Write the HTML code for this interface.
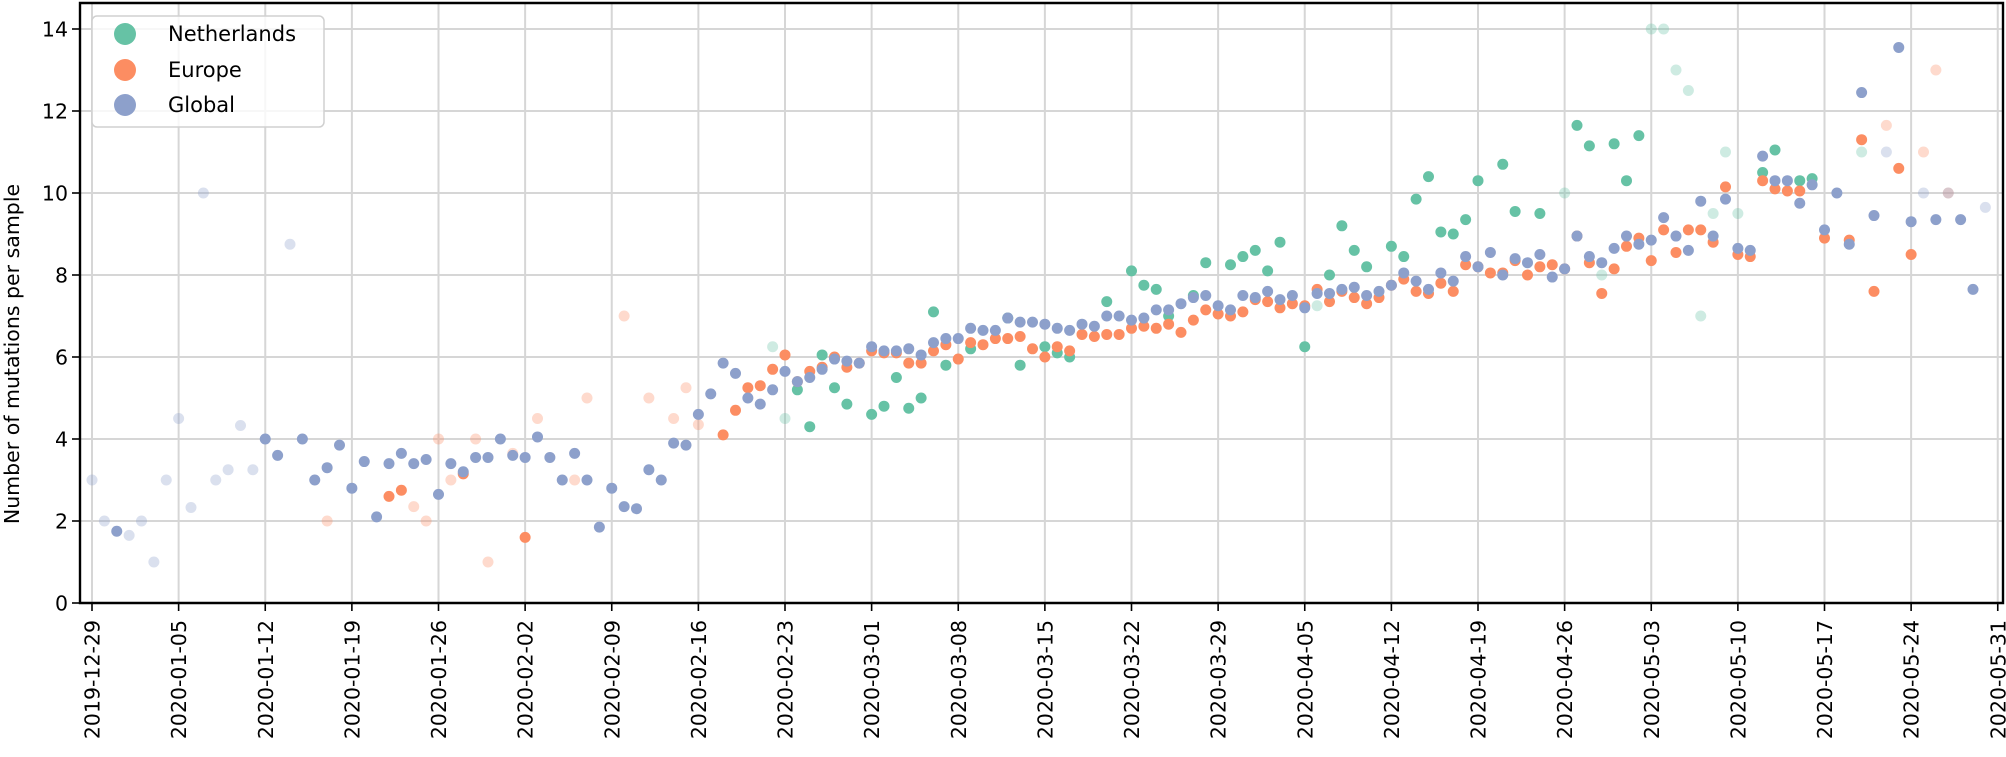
<!DOCTYPE html>
<html><head><meta charset="utf-8"><style>
html,body{margin:0;padding:0;background:#fff;}
svg{display:block;font-family:"DejaVu Sans","Liberation Sans",sans-serif;}
</style></head><body>
<svg id="s" width="2006" height="757" viewBox="0 0 2006 757" xmlns="http://www.w3.org/2000/svg">
<g id="grid"></g>
<g id="pts"></g>
<g id="axes"></g>
<g id="legend">
<rect x="92" y="16" width="232" height="111" rx="5" fill="#fff" fill-opacity="0.8" stroke="#d0d0d0" stroke-width="1.5"/>
<circle cx="125" cy="34" r="11" fill="#66c2a5"/>
<circle cx="125" cy="70" r="11" fill="#fc8d62"/>
<circle cx="125" cy="105" r="11" fill="#8da0cb"/>
<text x="168" y="41" font-size="21">Netherlands</text>
<text x="168" y="77" font-size="21">Europe</text>
<text x="168" y="112" font-size="21">Global</text>
</g>
</svg>
<script>
var NS="http://www.w3.org/2000/svg";
var X0=92,DX=12.375,Y0=603,DY=41.0;
function px(d){return X0+DX*d;}
function py(v){return Y0-DY*v;}
function el(p,t,a,txt){var e=document.createElementNS(NS,t);for(var k in a)e.setAttribute(k,a[k]);if(txt!==undefined)e.textContent=txt;p.appendChild(e);return e;}
var grid=document.getElementById('grid'),axes=document.getElementById('axes'),pts=document.getElementById('pts');
for(var v=0;v<=14;v+=2){el(grid,'line',{x1:80,x2:2003,y1:py(v),y2:py(v),stroke:'#d6d6d6','stroke-width':2});}
var labels=["2019-12-29","2020-01-05","2020-01-12","2020-01-19","2020-01-26","2020-02-02","2020-02-09","2020-02-16","2020-02-23","2020-03-01","2020-03-08","2020-03-15","2020-03-22","2020-03-29","2020-04-05","2020-04-12","2020-04-19","2020-04-26","2020-05-03","2020-05-10","2020-05-17","2020-05-24","2020-05-31"];
for(var k=0;k<labels.length;k++){var x=px(7*k);
 el(grid,'line',{x1:x,x2:x,y1:3,y2:603,stroke:'#d6d6d6','stroke-width':2});
 el(axes,'line',{x1:x,x2:x,y1:603,y2:611,stroke:'#000','stroke-width':1.6});
 el(axes,'text',{x:0,y:0,'font-size':20.5,'text-anchor':'end',transform:'translate('+(x+7.5)+',620) rotate(-90)'},labels[k]);
}
for(var v=0;v<=14;v+=2){el(axes,'line',{x1:72,x2:80,y1:py(v),y2:py(v),stroke:'#000','stroke-width':1.6});
 el(axes,'text',{x:68,y:py(v)+7.5,'font-size':20.5,'text-anchor':'end'},String(v));}
el(axes,'text',{x:0,y:0,'font-size':20.5,'text-anchor':'middle',transform:'translate(19,354) rotate(-90)'},'Number of mutations per sample');
el(axes,'path',{d:'M80,603 L80,3 L2003,3 L2003,603 Z',fill:'none',stroke:'#000','stroke-width':2.4});
function day(xd){return Math.round((xd-72)/9.675);}
var NL=[[604,6.25,1],[614,4.5,1],[624,5.2],[633,4.3],[643,6.05],[653,5.25],[662,4.85],[681,4.6],[691,4.8],[701,5.5],[710,4.75],[720,5.0],[730,7.1],[739,5.8],[759,6.2],[788,6.95],[797,5.8],[817,6.25],[826,6.1],[836,6.0],[865,7.35],[884,8.1],[894,7.75],[904,7.65],[913,7.0],[933,7.5],[942,8.3],[962,8.25],[971,8.45],[981,8.6],[991,8.1],[1000,8.8],[1020,6.25],[1029,7.25,1],[1039,8.0],[1049,9.2],[1058,8.6],[1068,8.2],[1087,8.7],[1097,8.45],[1107,9.85],[1116,10.4],[1126,9.05],[1136,9.0],[1145,9.35],[1155,10.3],[1175,10.7],[1184,9.55],[1204,9.5],[1223,10.0,1],[1233,11.65],[1242,11.15],[1252,8.0,1],[1262,11.2],[1271,10.3],[1281,11.4],[1291,14.0,1],[1301,14.0,1],[1310,13.0,1],[1320,12.5,1],[1330,7.0,1],[1339,9.5,1],[1349,11.0,1],[1359,9.5,1],[1378,10.5],[1388,11.05],[1407,10.3],[1417,10.35],[1455,11.0,1]];
var EU=[[256,2.0,1],[304,2.6],[314,2.75],[323,2.35,1],[333,2.0,1],[342,4.0,1],[352,3.0,1],[362,3.15],[372,4.0,1],[381,1.0,1],[401,3.65,1],[410,1.6],[420,4.5,1],[449,3.0,1],[459,5.0,1],[488,7.0,1],[507,5.0,1],[527,4.5,1],[536,5.25,1],[546,4.35,1],[566,4.1],[575,4.7],[585,5.25],[595,5.3],[604,5.7],[614,6.05],[624,5.4],[633,5.65],[643,5.75],[653,6.0],[662,5.75],[672,5.85],[681,6.15],[691,6.1],[701,6.1],[710,5.85],[720,5.85],[730,6.15],[739,6.3],[749,5.95],[759,6.35],[768,6.3],[778,6.45],[788,6.45],[797,6.5],[807,6.2],[817,6.0],[826,6.25],[836,6.15],[846,6.55],[855,6.5],[865,6.55],[875,6.55],[884,6.7],[894,6.75],[904,6.7],[913,6.8],[923,6.6],[933,6.9],[942,7.15],[952,7.05],[962,7.0],[971,7.1],[981,7.4],[991,7.35],[1000,7.2],[1010,7.3],[1020,7.25],[1029,7.65],[1039,7.35],[1049,7.6],[1058,7.45],[1068,7.3],[1078,7.45],[1087,7.75],[1097,7.9],[1107,7.6],[1116,7.55],[1126,7.8],[1136,7.6],[1145,8.25],[1155,8.2],[1165,8.05],[1175,8.05],[1184,8.35],[1194,8.0],[1204,8.2],[1213,8.25],[1223,8.15],[1233,8.95],[1242,8.3],[1252,7.55],[1262,8.15],[1271,8.7],[1281,8.9],[1291,8.35],[1301,9.1],[1310,8.55],[1320,9.1],[1330,9.1],[1339,8.8],[1349,10.15],[1359,8.5],[1368,8.45],[1378,10.3],[1388,10.1],[1397,10.05],[1407,10.05],[1426,8.9],[1446,8.85],[1455,11.3],[1465,7.6],[1475,11.65,1],[1485,10.6],[1494,8.5],[1504,11.0,1],[1514,13.0,1],[1524,10.0,1]];
var GL=[[72,3.0,1],[82,2.0,1],[91,1.75],[101,1.65,1],[111,2.0,1],[120,1.0,1],[130,3.0,1],[140,4.5,1],[149,2.33,1],[159,10,1],[168,3.0,1],[177,3.25,1],[187,4.33,1],[197,3.25,1],[207,4.0],[217,3.6],[227,8.75,1],[237,4.0],[246,3.0],[256,3.3],[265,3.85],[275,2.8],[285,3.45],[294,2.1],[304,3.4],[314,3.65],[324,3.4],[333,3.5],[343,2.65],[352,3.4],[362,3.2],[372,3.55],[381,3.55],[391,4.0],[401,3.6],[410,3.55],[420,4.05],[430,3.55],[439,3.0],[449,3.65],[459,3.0],[468,1.85],[478,2.8],[488,2.35],[498,2.3],[507,3.25],[517,3.0],[527,3.9],[536,3.85],[546,4.6],[556,5.1],[566,5.85],[575,5.6],[585,5.0],[595,4.85],[604,5.2],[614,5.65],[624,5.4],[633,5.5],[643,5.7],[653,5.95],[662,5.9],[672,5.85],[681,6.25],[691,6.15],[701,6.15],[710,6.2],[720,6.05],[730,6.35],[739,6.45],[749,6.45],[759,6.7],[768,6.65],[778,6.65],[788,6.95],[797,6.85],[807,6.85],[817,6.8],[826,6.7],[836,6.65],[846,6.8],[855,6.75],[865,7.0],[875,7.0],[884,6.9],[894,6.95],[904,7.15],[913,7.15],[923,7.3],[933,7.45],[942,7.5],[952,7.25],[962,7.15],[971,7.5],[981,7.45],[991,7.6],[1000,7.4],[1010,7.5],[1020,7.2],[1029,7.55],[1039,7.55],[1049,7.65],[1058,7.7],[1068,7.5],[1078,7.6],[1087,7.75],[1097,8.05],[1107,7.85],[1116,7.65],[1126,8.05],[1136,7.85],[1145,8.45],[1155,8.2],[1165,8.55],[1175,8.0],[1184,8.4],[1194,8.3],[1204,8.5],[1213,7.95],[1223,8.15],[1233,8.95],[1242,8.45],[1252,8.3],[1262,8.65],[1271,8.95],[1281,8.75],[1291,8.85],[1301,9.4],[1310,8.95],[1320,8.6],[1330,9.8],[1339,8.95],[1349,9.85],[1359,8.65],[1368,8.6],[1378,10.9],[1388,10.3],[1397,10.3],[1407,9.75],[1417,10.2],[1426,9.1],[1436,10.0],[1446,8.75],[1455,12.45],[1465,9.45],[1475,11.0,1],[1485,13.55],[1494,9.3],[1504,10.0,1],[1514,9.35],[1524,10.0,1],[1533,9.35],[1543,7.65],[1553,9.65,1]];
function draw(arr,col){arr.forEach(function(p){el(pts,'circle',{cx:px(day(p[0])),cy:py(p[1]),r:5.5,fill:col,'fill-opacity':p[2]?0.32:1});});}
draw(NL,'#66c2a5');draw(EU,'#fc8d62');draw(GL,'#8da0cb');
</script>
</body></html>
